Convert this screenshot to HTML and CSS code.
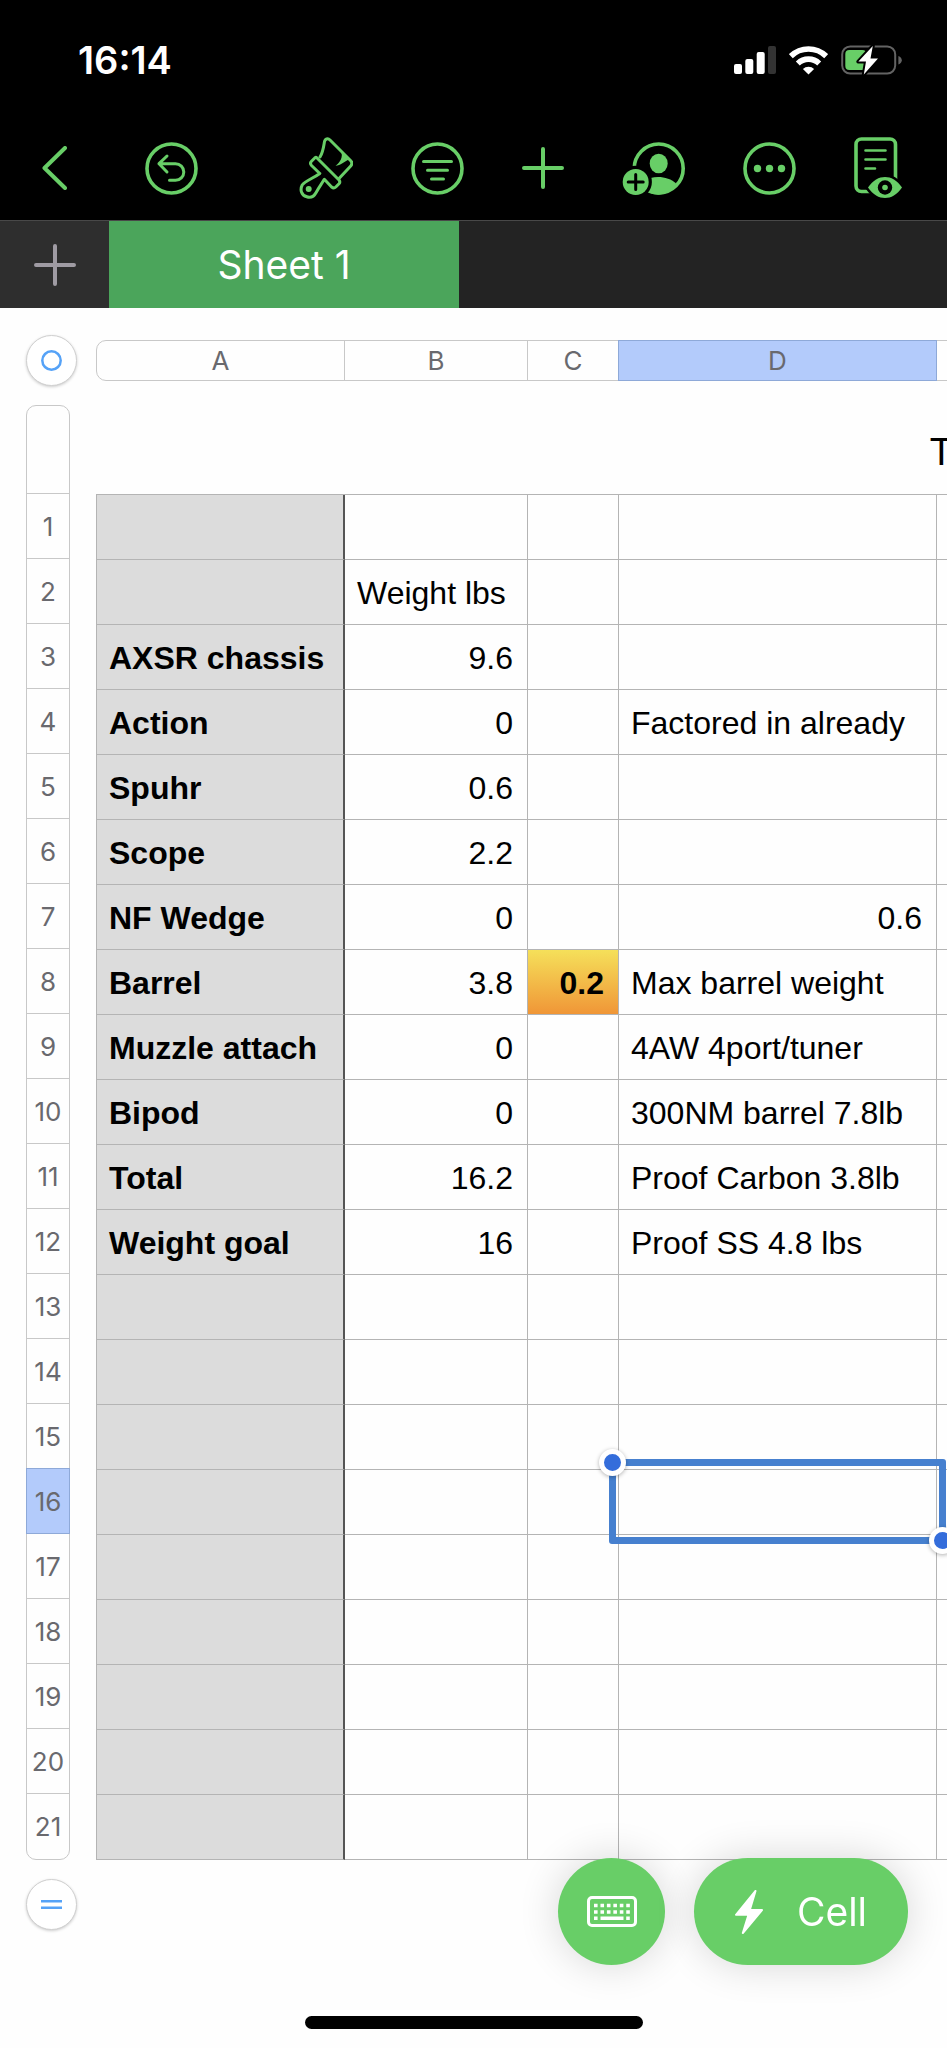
FILE: index.html
```html
<!DOCTYPE html>
<html lang="en">

<head>
  <meta charset="UTF-8">
  <title>Sheet 1</title>
  <meta name="viewport" content="width=device-width, initial-scale=1.0">
  <link rel="stylesheet" href="styles.css">
</head>

<body>

  <!-- HEADER -->
  <header>
    <div class="status-bar">
      <span class="time">16:14</span>
      <div class="status-icons">
        <svg width="42" height="28" viewBox="0 0 42 28" fill="#fff">
          <rect x="0" y="18" width="8" height="10" rx="2" />
          <rect x="11.3" y="13" width="8" height="15" rx="2" />
          <rect x="22.7" y="6" width="8" height="22" rx="2" />
          <rect x="34" y="0" width="8" height="28" rx="2" fill="#333" />
        </svg>
        <svg width="39" height="30" viewBox="0 0 39 30" fill="none" stroke="#fff" stroke-width="5.6">
          <path d="M1.8 11.2a25.3 25.3 0 0 1 35.4 0" />
          <path d="M8.8 18.4a15.4 15.4 0 0 1 21.4 0" />
          <path d="M19.5 29.6l-5.6-5.6a8 8 0 0 1 11.2 0z" fill="#fff" stroke="none" />
        </svg>
        <svg width="61" height="30" viewBox="0 0 61 30">
          <rect x="1.2" y="1.4" width="53" height="27.2" rx="8" fill="none" stroke="#636363" stroke-width="2" />
          <path d="M57.4 11c2.2 .8 3.4 2.4 3.4 4.2s-1.2 3.4-3.4 4.2z" fill="#636363" />
          <rect x="4.3" y="5" width="21" height="20" rx="4" fill="#68ce67" />
          <path d="M31.8 1L17.4 16.6H25L22.8 29.5L37 13.4H29.5Z" fill="#fff" stroke="#000" stroke-width="4"
            stroke-linejoin="round" paint-order="stroke" />
        </svg>
      </div>
    </div>

    <nav class="toolbar">
      <div class="tools-left">
        <button type="button" aria-label="Back">
          <svg width="25" height="44" viewBox="0 0 25 44">
            <path d="M23 2L2.5 22L23 42" stroke-width="4" />
          </svg>
        </button>
        <button type="button" aria-label="Undo">
          <svg width="53" height="53" viewBox="0 0 53 53">
            <circle cx="26.5" cy="26.5" r="24.5" stroke-width="3.6" />
            <path d="M22 14L14 21.7L22 30M14 21.7H30.5a8.3 8.3 0 0 1 0 16.6H24.5" />
          </svg>
        </button>
      </div>
      <div class="tools-right">
        <button type="button" aria-label="Format">
          <svg width="54" height="62" viewBox="0 0 54 62" stroke-width="3.6">
            <path d="M21 20C24 15 24.6 10 25.4 5C26 1.5 29 1 31 3L51.5 23.5C53.2 25.2 53.2 27.5 51.5 29.3L40.5 41" />
            <path d="M17.5 20.5L40 43C41 44.3 41 45.7 40 46.8L36.8 50C35.5 51.2 33.8 51 32.6 50L25.3 42.3C22.5 47 19.5 51 17.3 55.2C15 59.5 11.5 61 7.8 59.8C2 58 .9 52.5 3.2 48C6 44 14 41.5 20.8 36.500L12.5 28.5C11.3 27.2 11.3 25.5 12.5 24.3L15.5 21.2C16.2 20.3 17 20 17.5 20.5Z" />
            <path d="M42 14.5L50 22.5C45.5 24.5 41.5 28.5 36.5 28.7C41 25.5 44.5 20 42 14.5Z" fill="#68ce67" stroke="none" />
            <circle cx="9.7" cy="52" r="3" fill="#68ce67" stroke="none" />
          </svg>
        </button>
        <button type="button" aria-label="Organize">
          <svg width="53" height="53" viewBox="0 0 53 53">
            <circle cx="26.5" cy="26.5" r="24.5" stroke-width="3.6" />
            <path d="M12.5 19.5H40.5M16.5 28.2H36.5M20.5 37H32.5" />
          </svg>
        </button>
        <button type="button" aria-label="Insert">
          <svg width="42" height="42" viewBox="0 0 42 42">
            <path d="M21 2V40M2 21H40" stroke-width="4" />
          </svg>
        </button>
        <button type="button" aria-label="Collaborate">
          <svg width="63" height="53" viewBox="0 0 63 53">
            <circle cx="36.7" cy="26.5" r="24.5" stroke-width="3.6" />
            <g fill="#68ce67" stroke="none">
              <ellipse cx="36.7" cy="21.5" rx="9" ry="9.8" />
              <path d="M22 38.5C31 33.5 46 33.5 54.5 42C46 55 31 55 24 48Z" />
              <circle cx="13.7" cy="40" r="16.2" fill="#000" />
              <circle cx="13.7" cy="40" r="13" />
            </g>
            <path d="M13.7 32.5V47.5M6.2 40H21.2" stroke="#000" />
          </svg>
        </button>
        <button type="button" aria-label="More">
          <svg width="53" height="53" viewBox="0 0 53 53">
            <circle cx="26.5" cy="26.5" r="24.5" stroke-width="3.6" />
            <g fill="#68ce67" stroke="none">
              <circle cx="14.5" cy="26.5" r="3.7" />
              <circle cx="26.5" cy="26.5" r="3.7" />
              <circle cx="38.5" cy="26.5" r="3.7" />
            </g>
          </svg>
        </button>
        <button type="button" aria-label="Reading view">
          <svg width="49" height="62" viewBox="0 0 49 62">
            <rect x="2" y="2" width="39.5" height="52.5" rx="5.5" stroke-width="3.6" />
            <path d="M11.5 13.5H31.5M11.5 22.5H31.5M11.5 31.5H21" stroke-width="2.6" />
            <path d="M14 50.5C19 43 25 40 31 40S43 43 48 50.5C43 58 37 61 31 61S19 58 14 50.5Z" fill="#68ce67"
              stroke="#000" stroke-width="5" paint-order="stroke" />
            <circle cx="31" cy="50.5" r="7.2" fill="#000" stroke="none" />
            <circle cx="31" cy="50.5" r="2.8" fill="#68ce67" stroke="none" />
          </svg>
        </button>
      </div>
    </nav>
  </header>

  <!-- SHEET TABS -->
  <div class="tabs">
    <button type="button" class="tab-add" aria-label="Add sheet">
      <svg width="42" height="42" viewBox="0 0 42 42">
        <path d="M21 2V40M2 21H40" />
      </svg>
    </button>
    <button type="button" class="tab active">Sheet 1</button>
  </div>

  <!-- SPREADSHEET -->
  <main class="sheet">
    <button type="button" class="round-btn" aria-label="Select table">
      <svg width="21" height="21" viewBox="0 0 21 21">
        <circle cx="10.5" cy="10.5" r="9.2" />
      </svg>
    </button>

    <div class="clip">
      <div class="col-heads">
        <div>A</div>
        <div>B</div>
        <div>C</div>
        <div class="selected">D</div>
        <div></div>
      </div>
    </div>

    <ul class="row-heads">
      <li class="title-row"></li>
      <li>1</li>
      <li>2</li>
      <li>3</li>
      <li>4</li>
      <li>5</li>
      <li>6</li>
      <li>7</li>
      <li>8</li>
      <li>9</li>
      <li>10</li>
      <li>11</li>
      <li>12</li>
      <li>13</li>
      <li>14</li>
      <li>15</li>
      <li class="selected">16</li>
      <li>17</li>
      <li>18</li>
      <li>19</li>
      <li>20</li>
      <li>21</li>
    </ul>

    <div class="clip">
      <table>
        <caption>Table 1</caption>
        <colgroup>
          <col class="col-a">
          <col class="col-b">
          <col class="col-c">
          <col class="col-d">
          <col>
        </colgroup>
        <tbody>
          <tr><th></th><td></td><td></td><td></td><td></td></tr>
          <tr><th></th><td>Weight lbs</td><td></td><td></td><td></td></tr>
          <tr><th scope="row">AXSR chassis</th><td class="num">9.6</td><td></td><td></td><td></td></tr>
          <tr><th scope="row">Action</th><td class="num">0</td><td></td><td>Factored in already</td><td></td></tr>
          <tr><th scope="row">Spuhr</th><td class="num">0.6</td><td></td><td></td><td></td></tr>
          <tr><th scope="row">Scope</th><td class="num">2.2</td><td></td><td></td><td></td></tr>
          <tr><th scope="row">NF Wedge</th><td class="num">0</td><td></td><td class="num">0.6</td><td></td></tr>
          <tr><th scope="row">Barrel</th><td class="num">3.8</td><td class="num warn">0.2</td><td>Max barrel weight</td><td></td></tr>
          <tr><th scope="row">Muzzle attach</th><td class="num">0</td><td></td><td>4AW 4port/tuner</td><td></td></tr>
          <tr><th scope="row">Bipod</th><td class="num">0</td><td></td><td>300NM barrel 7.8lb</td><td></td></tr>
          <tr><th scope="row">Total</th><td class="num">16.2</td><td></td><td>Proof Carbon 3.8lb</td><td></td></tr>
          <tr><th scope="row">Weight goal</th><td class="num">16</td><td></td><td>Proof SS 4.8 lbs</td><td></td></tr>
          <tr><th></th><td></td><td></td><td></td><td></td></tr>
          <tr><th></th><td></td><td></td><td></td><td></td></tr>
          <tr><th></th><td></td><td></td><td></td><td></td></tr>
          <tr><th></th><td></td><td></td><td class="current"><div class="selection"></div></td><td></td></tr>
          <tr><th></th><td></td><td></td><td></td><td></td></tr>
          <tr><th></th><td></td><td></td><td></td><td></td></tr>
          <tr><th></th><td></td><td></td><td></td><td></td></tr>
          <tr><th></th><td></td><td></td><td></td><td></td></tr>
          <tr><th></th><td></td><td></td><td></td><td></td></tr>
        </tbody>
      </table>
    </div>

    <button type="button" class="round-btn" aria-label="Add rows">
      <svg width="21" height="21" viewBox="0 0 21 21">
        <path d="M0 7.3H21M0 13.7H21" />
      </svg>
    </button>
  </main>

  <!-- FLOATING BUTTONS -->
  <div class="actions">
    <button type="button" class="action keyboard" aria-label="Keyboard">
      <svg width="50" height="31" viewBox="0 0 50 31" fill="none" stroke="#fff" stroke-width="3">
        <rect x="1.5" y="1.5" width="47" height="28" rx="3.5" />
        <path d="M7 9.5H43M7 16H43" stroke-width="3.4" stroke-dasharray="3.6 2.85" />
        <path d="M7 22.3H10.6M13.5 22.3H36.5M39.2 22.3H42.8" stroke-width="3.4" />
      </svg>
    </button>
    <button type="button" class="action cell">
      <svg width="28" height="44" viewBox="0 0 28 44" fill="#fff" stroke="#fff" stroke-width="2" stroke-linejoin="round">
        <path d="M20.5 1L1 24.8H13.5L7.8 43L27 20H14.8Z" />
      </svg>
      Cell
    </button>
  </div>

  <div class="home-bar"></div>

</body>

</html>
```
FILE: styles.css
```css
*,
*::before,
*::after {
  box-sizing: border-box;
}

body {
  font-family: Inter, "Liberation Sans", sans-serif;
  background-color: #fefefe;
  margin: 0;
  min-height: 100vh;
  overflow-x: hidden;
}

button {
  display: flex;
  align-items: center;
  justify-content: center;
  padding: 0;
  border: none;
  background: none;
  font-family: inherit;
  color: inherit;
  cursor: pointer;
}

svg {
  display: block;
  flex-shrink: 0;
}

/* Header */
header {
  background-color: #000;
  padding-top: 4px;
}

.status-bar {
  height: 112px;
  padding: 0 45px 0 78px;
  display: flex;
  justify-content: space-between;
  align-items: center;
  color: #fff;
}

.time {
  font-size: 38px;
  font-weight: 600;
}

.status-icons {
  display: flex;
  align-items: center;
  gap: 13px;
}

.toolbar {
  height: 104px;
  padding: 0 44px 0 42px;
  display: flex;
  justify-content: space-between;
  align-items: center;
}

.toolbar svg {
  fill: none;
  stroke: #68ce67;
  stroke-width: 3;
  stroke-linecap: round;
  stroke-linejoin: round;
}

.tools-left,
.tools-right {
  display: flex;
  align-items: center;
}

.tools-left {
  gap: 78px;
}

.tools-right {
  gap: 58px;
}

/* Sheet tabs */
.tabs {
  height: 88px;
  display: flex;
  background-color: #232323;
  border-top: 1px solid #484848;
}

.tab-add {
  width: 109px;
  background-color: #2e2e2e;
}

.tab-add svg {
  fill: none;
  stroke: #9f9ba3;
  stroke-width: 4;
  stroke-linecap: round;
}

.tab {
  width: 350px;
  font-size: 39px;
  color: #fff;
}

.tab.active {
  background-color: #4ba55b;
}

/* Spreadsheet */
.sheet {
  display: grid;
  grid-template-columns: 51px 1fr;
  gap: 19px;
  align-items: center;
  padding: 27px 0 27px 26px;
}

.clip {
  overflow: hidden;
  min-width: 0;
}

.round-btn {
  width: 51px;
  height: 51px;
  border: 1px solid #d0d0d0;
  border-radius: 50%;
  background-color: #fff;
  box-shadow: 0 1px 3px rgba(0, 0, 0, 0.2);
}

.round-btn svg {
  fill: none;
  stroke: #55a2f7;
  stroke-width: 2.5;
}

.col-heads {
  display: grid;
  grid-template-columns: 248px 183px 91px 318px 1fr;
  width: 1790px;
  height: 41px;
  border: 1px solid #c8c8c8;
  border-radius: 10px;
  font-size: 26px;
  color: #69696e;
}

.col-heads div {
  display: flex;
  align-items: center;
  justify-content: center;
  border-right: 1px solid #c8c8c8;
}

.col-heads .selected {
  margin: -1px 0 -1px -1px;
  background-color: #b3cbfb;
  border: 1px solid #8ea9d8;
}

.row-heads {
  width: 44px;
  margin: 0;
  padding: 0;
  list-style: none;
  border: 1px solid #c8c8c8;
  border-radius: 10px;
  font-size: 26px;
  color: #69696e;
}

.row-heads li {
  height: 65px;
  display: flex;
  align-items: center;
  justify-content: center;
  border-bottom: 1px solid #c8c8c8;
}

.row-heads .title-row {
  height: 88px;
}

.row-heads li:last-child {
  border-bottom: none;
}

.row-heads .selected {
  height: 66px;
  margin: -1px -1px 0;
  background-color: #b3cbfb;
  border: 1px solid #8ea9d8;
}

table {
  width: 1790px;
  table-layout: fixed;
  border-spacing: 0;
  border-top: 1px solid #b4b4b4;
  border-left: 1px solid #b4b4b4;
  font-family: "Liberation Sans", Arial, sans-serif;
  font-size: 32px;
  color: #000;
}

caption {
  height: 88px;
  line-height: 92px;
  font-size: 38px;
}

.col-a {
  width: 248px;
}

.col-b {
  width: 183px;
}

.col-c {
  width: 91px;
}

.col-d {
  width: 318px;
}

th,
td {
  height: 65px;
  padding: 4px 14px 0 12px;
  border-right: 1px solid #b4b4b4;
  border-bottom: 1px solid #b4b4b4;
  text-align: left;
  white-space: nowrap;
}

th {
  padding-right: 0;
  background-color: #dcdcdc;
  border-right: 2px solid #555;
}

.num {
  text-align: right;
}

.warn {
  background: linear-gradient(#f5e05a, #f09637);
  font-weight: bold;
}

/* Selected cell */
.current {
  position: relative;
}

.selection {
  position: absolute;
  inset: -11px -10px -10px;
  border: 7px solid #4680cf;
  border-radius: 3px;
}

.selection::before,
.selection::after {
  content: "";
  position: absolute;
  width: 27px;
  height: 27px;
  border: 5px solid #fff;
  border-radius: 50%;
  background-color: #346ddb;
  box-shadow: 0 1px 4px rgba(0, 0, 0, 0.3);
}

.selection::before {
  top: -17px;
  left: -17px;
}

.selection::after {
  right: -17px;
  bottom: -17px;
}

/* Floating buttons */
.actions {
  position: fixed;
  right: 39px;
  bottom: 83px;
  display: flex;
  gap: 29px;
}

.action {
  height: 107px;
  border-radius: 54px;
  background-color: #68ce67;
  box-shadow: 0 0 40px rgba(0, 0, 0, 0.16);
  color: #fff;
  font-size: 39px;
}

.keyboard {
  width: 107px;
}

.cell {
  width: 214px;
  gap: 34px;
}

.home-bar {
  position: fixed;
  left: 50%;
  bottom: 19px;
  width: 338px;
  height: 13px;
  border-radius: 7px;
  background-color: #000;
  transform: translateX(-50%);
}
```
